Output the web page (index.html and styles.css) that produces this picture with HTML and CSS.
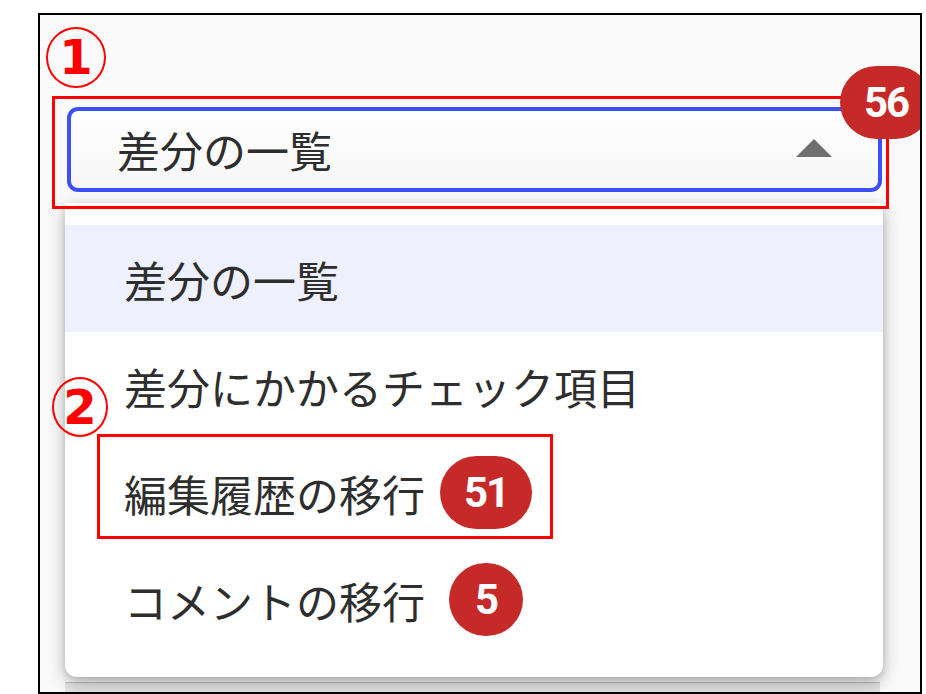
FILE: index.html
```html
<!DOCTYPE html>
<html lang="ja">
<head>
<meta charset="utf-8">
<link rel="stylesheet" href="styles.css">
</head>
<body>
<div class="frame">
  <span class="marker marker-1">1</span>
  <div class="select">
    <span class="select-value">差分の一覧</span>
    <span class="arrow"></span>
  </div>
  <div class="menu">
    <div class="item active"><span>差分の一覧</span></div>
    <div class="item"><span>差分にかかるチェック項目</span></div>
    <div class="item"><span>編集履歴の移行</span><span class="slot"><span class="badge">51</span></span></div>
    <div class="item"><span>コメントの移行</span><span class="slot"><span class="badge">5</span></span></div>
  </div>
  <div class="behind">工程の紐づけ変更</div>
  <span class="badge badge-top">56</span>
  <span class="marker marker-2">2</span>
  <div class="anno anno-1"></div>
  <div class="anno anno-2"></div>
</div>
</body>
</html>
```
FILE: styles.css
```css
html, body {
  margin: 0;
  padding: 0;
  background: #ffffff;
}
body {
  font-family: "Noto Sans CJK JP", "Noto Sans", sans-serif;
}
.frame {
  position: relative;
  box-sizing: border-box;
  margin: 13px 0 0 38px;
  width: 884px;
  height: 681px;
  border: 2px solid #000;
  background: #fafafa;
  overflow: hidden;
}
.select {
  box-sizing: border-box;
  margin: 92px 38px 0 27px;
  height: 85px;
  border: 4px solid #3d4ff6;
  border-radius: 11px;
  background: linear-gradient(#ffffff, #f6f6f6);
  display: flex;
  align-items: center;
  padding: 0 46px 0 46px;
  justify-content: space-between;
}
.select-value {
  font-size: 43px;
  color: #2e2e2e;
  line-height: 1;
}
.arrow {
  width: 0;
  height: 0;
  border-left: 18px solid transparent;
  border-right: 18px solid transparent;
  border-bottom: 18px solid #6f6f6f;
  margin-top: -4px;
}
.menu {
  margin: 11px 37px 0 25px;
  padding: 22px 0 24px;
  background: #fff;
  border-radius: 0 0 12px 12px;
  box-shadow: 0 6px 18px rgba(0,0,0,0.28), 0 2px 6px rgba(0,0,0,0.12);
  position: relative;
  z-index: 1;
}
.item {
  height: 107px;
  display: flex;
  align-items: center;
  padding-left: 59px;
  font-size: 43px;
  color: #2e2e2e;
}
.item.active {
  background: #eff0fe;
}
.slot {
  width: 94px;
  margin-left: 14px;
  display: flex;
  justify-content: center;
}
.badge {
  box-sizing: border-box;
  height: 73px;
  min-width: 74px;
  padding: 0 24px;
  border-radius: 37px;
  background: #c62a28;
  color: #fff;
  font-family: Roboto, "Liberation Sans", sans-serif;
  font-weight: 700;
  font-size: 42px;
  display: inline-flex;
  align-items: center;
  justify-content: center;
  letter-spacing: -2px;
}
.badge-top {
  position: absolute;
  left: 800px;
  top: 51px;
  width: 92px;
  z-index: 3;
}
.behind {
  margin: 5px 40px 0 25px;
  padding-left: 90px;
  background: #e4e4e4;
  color: #444;
  font-size: 43px;
  line-height: 60px;
  height: 60px;
  border-top: 1px solid #bbb;
}
.marker {
  position: absolute;
  box-sizing: border-box;
  width: 60px;
  height: 61px;
  border: 2px solid #ff0000;
  border-radius: 50%;
  color: #ff0000;
  font-family: "DejaVu Sans", sans-serif;
  font-weight: 700;
  font-size: 48px;
  line-height: 57px;
  text-align: center;
  z-index: 4;
}
.marker-1 {
  left: 6px;
  top: 12px;
}
.marker-2 {
  left: 12px;
  top: 362px;
  width: 56px;
  height: 60px;
  line-height: 56px;
}
.anno {
  position: absolute;
  box-sizing: border-box;
  border: 3px solid #ff0000;
  z-index: 2;
}
.anno-1 {
  left: 12px;
  top: 81px;
  width: 837px;
  height: 113px;
}
.anno-2 {
  left: 57px;
  top: 419px;
  width: 456px;
  height: 105px;
}
```
